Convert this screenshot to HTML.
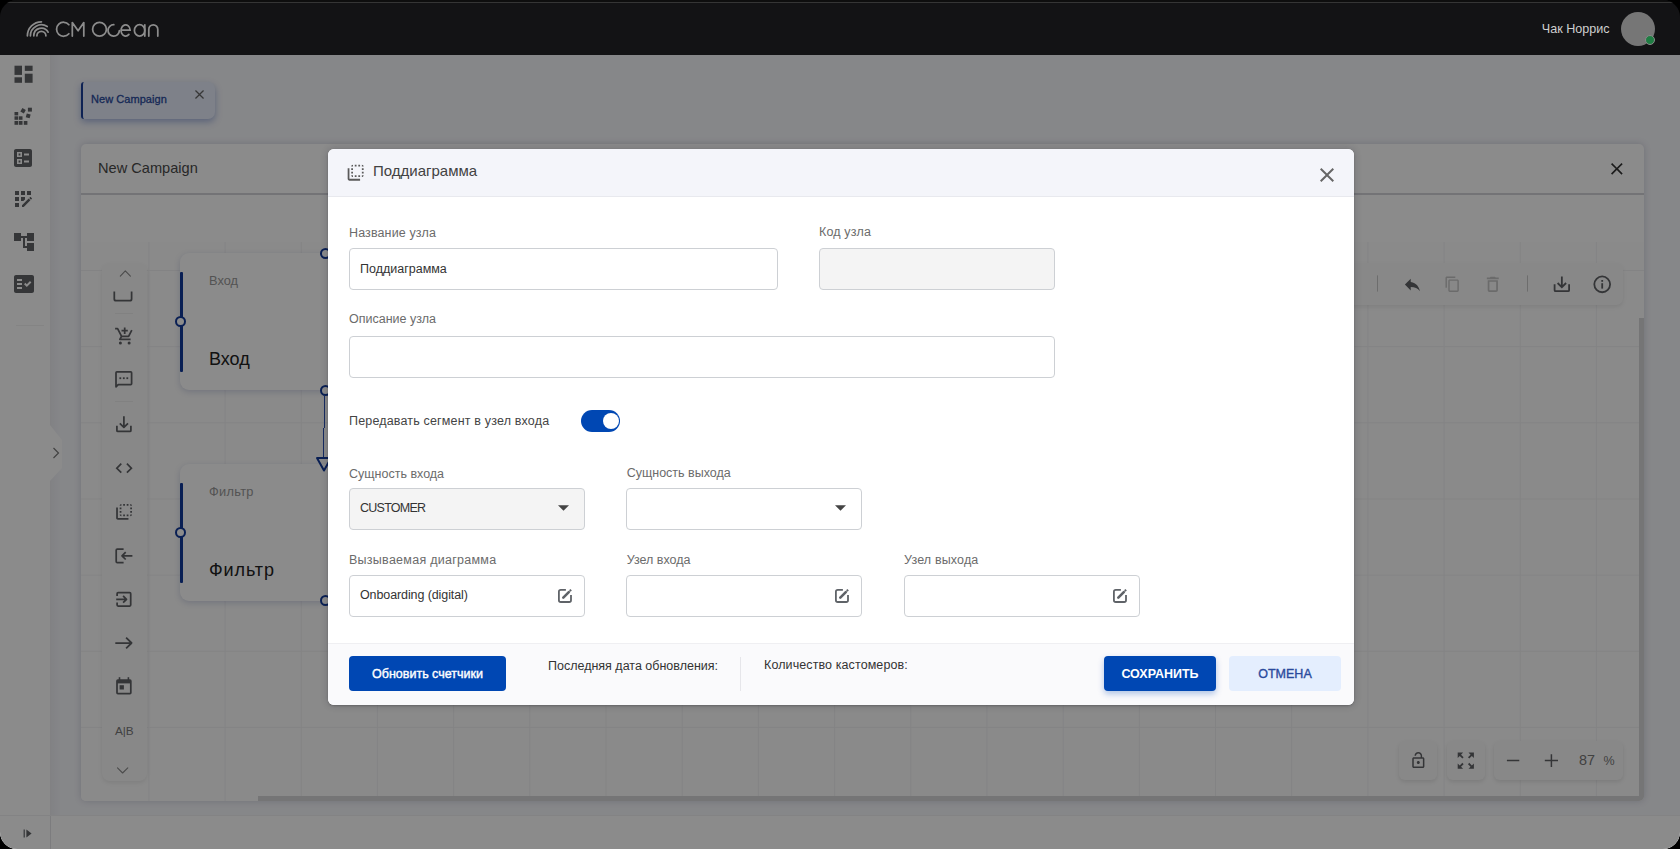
<!DOCTYPE html>
<html><head><meta charset="utf-8">
<style>
*{box-sizing:border-box;margin:0;padding:0}
html,body{width:1680px;height:849px;overflow:hidden;background:#000;font-family:"Liberation Sans",sans-serif}
.abs{position:absolute}
svg{position:absolute;overflow:visible}
#root{position:absolute;left:0;top:0;width:1680px;height:849px;overflow:hidden;border-radius:17px;background:#000}
#hdr{position:absolute;left:0;top:0;width:1680px;height:55px;background:#131315}
#hdr .tl{position:absolute;left:0;top:0;width:1680px;height:2px;background:#0e0e0e}
#hdr .tl2{position:absolute;left:0;top:2px;width:1680px;height:1px;background:#353535}
#side{position:absolute;left:0;top:55px;width:50px;height:760px;background:#fff;box-shadow:1px 0 0 #e2e2e6}
#foot{position:absolute;left:0;top:815px;width:1680px;height:34px;background:#fff;border-top:1px solid #f0f0f2}
#ov{position:absolute;left:0;top:55px;width:1680px;height:794px;background:rgba(0,0,0,0.455)}
.ic{fill:#626467}
.tab{position:absolute;left:81px;top:82px;width:134px;height:37px;background:#e7edfb;border-radius:3px 7px 7px 3px;border-left:2px solid #1a3f9a;box-shadow:0 3px 7px rgba(20,60,170,.35)}
.card{position:absolute;left:81px;top:144px;width:1563px;height:657px;background:#fff;border-radius:5px;box-shadow:0 0 7px rgba(20,30,80,.18);overflow:hidden}
.grid{position:absolute;left:0;top:98px;width:1563px;height:559px;background:#fdfdfd;
 background-image:linear-gradient(to right,#f1f1f3 1px,transparent 1px),linear-gradient(to bottom,#f1f1f3 1px,transparent 1px);
 background-size:76.2px 76.17px;background-position:67.4px 28px}
.pal{position:absolute;left:21px;top:119px;width:45px;height:518px;background:#fafafa;border-radius:8px;box-shadow:0 2px 4px rgba(0,0,0,.08)}
.node{position:absolute;width:160px;height:137px;background:#fff;border-radius:9px;box-shadow:0 2px 6px rgba(20,40,120,.18)}
.node .bl{position:absolute;left:0;width:3px;height:100px;background:#123a9a;border-radius:1px}
.node .dot{position:absolute;left:-5.5px;width:11px;height:11px;border:2px solid #123a9a;border-radius:50%;background:#fff}
.node .s{position:absolute;left:29px;font-size:12.8px;color:#999;white-space:nowrap}
.node .b{position:absolute;left:29px;font-size:18px;color:#222;white-space:nowrap}
.cdot{position:absolute;width:11px;height:11px;border:2px solid #123a9a;border-radius:50%;background:#fff}
.tb{position:absolute;left:1200px;top:119px;width:342px;height:42px;background:#fafafa;border-radius:7px;box-shadow:0 2px 4px rgba(0,0,0,.08)}
.zb{position:absolute;top:597px;height:39px;background:#fafafa;border-radius:6px;box-shadow:0 2px 4px rgba(0,0,0,.1)}
#modal{position:absolute;left:328px;top:149px;width:1026px;height:556px;background:#fff;border-radius:6px;overflow:hidden;box-shadow:0 0 7px 1px rgba(20,20,40,.16),0 1px 2px rgba(0,0,0,.2)}
.mh{position:absolute;left:0;top:0;width:1026px;height:48px;background:#f4f5fa;border-bottom:1px solid #e8e9ee}
.lbl{position:absolute;font-size:12.5px;color:#6b6b6b;white-space:nowrap;line-height:14px}
.inp{position:absolute;height:42px;border:1px solid #cdd0d4;border-radius:4px;background:#fff}
.dis{background:#f4f4f4}
.txt{position:absolute;font-size:12.5px;color:#333;white-space:nowrap;line-height:14px}
.mf{position:absolute;left:0;top:494px;width:1026px;height:62px;background:#fafafc;border-top:1px solid #efeff2}
.btn{position:absolute;top:12.3px;height:35px;border-radius:4px;background:#0047b3;color:#fff;font-size:12.5px;font-weight:bold;text-align:center;line-height:36.4px;white-space:nowrap}
</style></head><body>
<div id="root">
 <div class="abs" style="left:0;top:55px;width:1680px;height:794px;background:#f6f7fb"></div>
 <div id="hdr">
  <div class="tl"></div><div class="tl2"></div>
  <svg width="140" height="30" style="left:20px;top:12px" viewBox="20 12 140 30" fill="none" stroke="#8c8c8c" stroke-width="1.75" stroke-linecap="round" stroke-linejoin="round">
   <path d="M36.9 35.8 A4.5 4.5 0 0 1 45.9 35.8"/>
   <path d="M33.8 35.8 A7.6 7.6 0 0 1 48.1 32.2"/>
   <path d="M30.4 35.8 A11 11 0 0 1 47.2 26.5"/>
   <path d="M27.4 35.8 A14 14 0 0 1 41.4 21.8"/>
   <path d="M68.9 24.7 A7 7 0 1 0 68.9 33.8"/>
   <path d="M72.3 36 V22.6 L78.1 30.8 L83.8 22.6 V36"/>
   <circle cx="99.5" cy="29.2" r="6.9"/>
   <path d="M113.8 24.7 A5.7 5.7 0 1 0 119.4 30.6"/>
   <path d="M121.2 30.2 H130.2 A4.6 5.6 0 1 0 128.9 34.4"/>
   <ellipse cx="139.6" cy="30.4" rx="5.2" ry="5.7"/>
   <path d="M144.8 24.8 V36"/>
   <path d="M148.8 36 V29.6 A4.5 4.8 0 0 1 157.8 29.6 V36"/>
  </svg>
  <div class="abs" style="right:70.4px;top:22.2px;font-size:12.6px;color:#cfcfcf;white-space:nowrap">Чак Норрис</div>
  <div class="abs" style="left:1621px;top:12px;width:34px;height:34px;border-radius:50%;background:#767676"></div>
  <div class="abs" style="left:1644.6px;top:35px;width:10.4px;height:10.4px;border-radius:50%;background:#1f7d43;border:1.4px solid #8a8a8a"></div>
 </div>
 <div id="side">
  <svg width="50" height="60" viewBox="0 55 50 60" style="left:0;top:0" fill="#626467">
   <rect x="14.5" y="65.7" width="7.5" height="9.2"/><rect x="14.5" y="77.3" width="7.5" height="5.5"/><rect x="24.8" y="65.7" width="7.8" height="5.2"/><rect x="24.8" y="73.7" width="7.8" height="9.1"/>
  </svg>
  <svg width="50" height="40" viewBox="0 100 50 40" style="left:0;top:45px" fill="#626467">
   <rect x="14.5" y="112" width="3.7" height="3.4"/><rect x="14.5" y="116.3" width="3.7" height="3.5"/><rect x="18.9" y="116.3" width="3.6" height="3.5"/>
   <rect x="14.5" y="121" width="3.7" height="3.8"/><rect x="18.9" y="121" width="3.6" height="3.8"/><rect x="23.8" y="121" width="3.6" height="3.8"/>
   <rect x="21.1" y="108.8" width="4" height="4" transform="rotate(30 23.1 110.8)"/>
   <rect x="27.9" y="107.7" width="4" height="3.9"/>
   <rect x="26.2" y="113.9" width="4" height="4" transform="rotate(15 28.2 115.9)"/>
  </svg>
  <!-- ballot -->
  <svg class="ic" width="24" height="24" viewBox="0 0 24 24" style="left:11px;top:91px"><path d="M19 3H5c-1.1 0-2 .9-2 2v14c0 1.1.9 2 2 2h14c1.1 0 2-.9 2-2V5c0-1.1-.9-2-2-2zM11 11H6V6h5v5zm0 7H6v-5h5v5zm7-8.5h-5v-2h5v2zm0 7h-5v-2h5v2z"/><path d="M7.6 7.6h1.8v1.8H7.6zM7.6 14.6h1.8v1.8H7.6z" fill="#626467"/><rect x="7.2" y="7.2" width="2.6" height="2.6" fill="none"/></svg>
  <!-- app registration -->
  <svg class="ic" width="24" height="24" viewBox="0 0 24 24" style="left:11px;top:132px"><path d="M10 4h4v4h-4zM4 16h4v4H4zm0-6h4v4H4zm0-6h4v4H4zm10 8.42V10h-4v4h2.42zm6.88-1.13l-1.17-1.17c-.16-.16-.42-.16-.58 0l-.88.88L20 12.75l.88-.88c.16-.16.16-.42 0-.58zM11 18.25V20h1.75l6.67-6.67-1.75-1.75zM16 4h4v4h-4z"/></svg>
  <!-- account tree -->
  <svg class="ic" width="24" height="24" viewBox="0 0 24 24" style="left:11.7px;top:175px"><path d="M22 11V3h-7v3H9V3H2v8h7V8h2v10h4v3h7v-8h-7v3h-2V8h2v3z"/></svg>
  <!-- fact check -->
  <svg class="ic" width="24" height="24" viewBox="0 0 24 24" style="left:11.7px;top:217px"><path d="M20 3H4c-1.1 0-2 .9-2 2v14c0 1.1.9 2 2 2h16c1.1 0 2-.9 2-2V5c0-1.1-.9-2-2-2zM10 17H5v-2h5v2zm0-4H5v-2h5v2zm0-4H5V7h5v2zm4.82 6L12 12.16l1.41-1.41 1.41 1.42L17.99 9l1.42 1.42L14.82 15z"/></svg>
  <div class="abs" style="left:16px;top:270px;width:28px;height:1px;background:#f2f2f2"></div>
 </div>
 <div id="foot">
  <div class="abs" style="left:50px;top:0;width:1px;height:34px;background:#e4e4e8"></div>
  <svg width="10" height="10" viewBox="0 0 10 10" style="left:23px;top:13px"><rect x="0.6" y="0.5" width="1.2" height="8" fill="#606266"/><path d="M3.4 0.5 L8.6 4.5 L3.4 8.5z" fill="#606266"/></svg>
 </div>
 <!-- main area -->
 <div class="abs" style="left:50px;top:55px;width:1px;height:760px;background:#ececf0"></div>
 <div class="abs" style="left:51px;top:55px;width:10px;height:760px;background:linear-gradient(to right,rgba(0,0,30,.035),rgba(0,0,0,0))"></div>
 <div class="tab">
  <div class="abs" style="left:8px;top:10.5px;font-size:11px;letter-spacing:0.05px;font-weight:normal;-webkit-text-stroke:0.3px #2a4b9e;color:#2a4b9e;white-space:nowrap">New Campaign</div>
  <svg width="9" height="9" viewBox="5 5 14 14" style="left:112px;top:7.5px"><path fill="#666" d="M19 6.41L17.59 5 12 10.59 6.41 5 5 6.41 10.59 12 5 17.59 6.41 19 12 13.41 17.59 19 19 17.59 13.41 12z"/></svg>
 </div>
 <div class="abs" style="left:50px;top:425px;width:12px;height:56px;background:#fff;clip-path:polygon(0 0,0 100%,100% 77%,100% 27%)"></div>
 <svg width="8" height="12" viewBox="0 0 8 12" style="left:52px;top:447px" fill="none" stroke="#7a7a7a" stroke-width="1.2"><path d="M1.5 1 L6.5 6 L1.5 11"/></svg>
 <div class="card">
  <div class="abs" style="left:17px;top:16px;font-size:14.6px;color:#4a4a4a;white-space:nowrap">New Campaign</div>
  <svg width="11.7" height="11.7" viewBox="5 5 14 14" style="left:1529.5px;top:19px"><path fill="#333" d="M19 6.41L17.59 5 12 10.59 6.41 5 5 6.41 10.59 12 5 17.59 6.41 19 12 13.41 17.59 19 19 17.59 13.41 12z"/></svg>
  <div class="abs" style="left:0;top:49px;width:1563px;height:1.5px;background:#d4d4d8"></div>
  <div class="grid"></div>
  <!-- palette -->
  <div class="pal">
  </div>
  <!-- toolbar -->
  <div class="tb"></div>
  <!-- nodes -->
  <div class="node" style="left:99px;top:109px">
   <div class="bl" style="top:19px"></div><div class="dot" style="top:63px"></div>
   <div class="s" style="top:19.5px">Вход</div><div class="b" style="top:96px">Вход</div>
  </div>
  <div class="node" style="left:99px;top:320px">
   <div class="bl" style="top:19px"></div><div class="dot" style="top:63px"></div>
   <div class="s" style="top:19.5px;letter-spacing:0.3px">Фильтр</div><div class="b" style="top:96px;letter-spacing:0.9px">Фильтр</div>
  </div>
  <div class="cdot" style="left:238.5px;top:103.5px"></div>
  <div class="cdot" style="left:238.5px;top:241px"></div>
  <div class="cdot" style="left:238.5px;top:451px"></div>
  <div class="abs" style="left:243.3px;top:252px;width:1.2px;height:32px;background:#2a50b0"></div>
  <div class="abs" style="left:242.3px;top:284px;width:1.2px;height:30px;background:#2a50b0"></div>
  <svg width="18" height="16" viewBox="0 0 18 16" style="left:234px;top:312px" fill="none" stroke="#123a9a" stroke-width="2" stroke-linejoin="round"><path d="M2 2 H16 L9 14.5z"/></svg>
  <!-- zoom controls -->
  <div class="zb" style="left:1318px;width:38px"></div>
  <div class="zb" style="left:1366px;width:38px"></div>
  <div class="zb" style="left:1413px;width:129px"></div>
  <!-- scrollbars -->
  <div class="abs" style="left:1558px;top:174px;width:5px;height:479px;background:#d6d6d8"></div>
  <div class="abs" style="left:177px;top:652px;width:1386px;height:5px;background:#d6d6d8"></div>
 </div>

 <svg width="1680" height="849" style="left:0;top:0" viewBox="0 0 1680 849">
  <g fill="none" stroke="#8a8a8a" stroke-width="1.1" stroke-linecap="round" stroke-linejoin="round">
   <path d="M120.3 276.2 L125.3 270.9 L130.4 276.2"/>
   <path d="M117.5 767.8 L122.6 773 L127.8 767.8"/>
  </g>
  <g fill="none" stroke="#606266" stroke-width="1.75" stroke-linecap="butt" stroke-linejoin="round">
   <path d="M114.3 291.4 V299 Q114.3 300.7 116 300.7 H129.9 Q131.6 300.7 131.6 299 V291.4"/>
   <!-- cart -->
   <path d="M115.1 328.7 H117.6 L121.6 336.4 H128.6 L131.8 330.2"/>
   <path d="M121.6 336.4 L120 339 Q119.6 339.4 120.4 339.4 H130.6"/>
   <path d="M124.7 327.4 V334 M121.5 330.6 H127.8"/>
   <!-- chat -->
   <path d="M118.2 384.6 H130.7 Q131.6 384.6 131.6 383.7 V372.7 Q131.6 371.9 130.7 371.9 H116.9 Q116 371.9 116 372.7 V386.8 Z"/>
   <!-- login mirrored -->
   <path d="M123.6 549.1 H117.3 Q116.2 549.1 116.2 550.2 V561.5 Q116.2 562.6 117.3 562.6 H123.6"/>
   <path d="M132.4 555.8 H122 M125.7 552.1 L122 555.8 L125.7 559.5"/>
   <!-- exit -->
   <path d="M117.1 596 V593.7 Q117.1 592.7 118.1 592.7 H129.7 Q130.7 592.7 130.7 593.7 V605.1 Q130.7 606 129.7 606 H118.1 Q117.1 606 117.1 605.1 V602.6"/>
   <path d="M116.2 599.3 H126.4 M123.1 595.9 L126.5 599.3 L123.1 602.7"/>
   <!-- arrow -->
   <path d="M115.3 643 H131.6 M126.1 637.7 L131.6 643 L126.1 648.3"/>
   <!-- calendar -->
   <path d="M117.9 680 H130 Q130.8 680 130.8 681 V692.7 Q130.8 693.6 130 693.6 H117.9 Q117 693.6 117 692.7 V681 Q117 680 117.9 680 Z"/>
   <!-- download -->
   <path d="M116.9 425.8 V430.4 Q116.9 431.4 117.9 431.4 H129.9 Q130.9 431.4 130.9 430.4 V425.8"/>
   <path d="M123.9 416.3 V427.4 M119.8 423.3 L123.9 427.4 L128 423.3"/>
  </g>
  <g fill="#606266">
   <circle cx="120.4" cy="343" r="1.5"/><circle cx="129.1" cy="343" r="1.5"/>
   <rect x="119.4" y="377.3" width="1.8" height="1.8"/><rect x="122.9" y="377.3" width="1.8" height="1.8"/><rect x="126.4" y="377.3" width="1.8" height="1.8"/>
   <rect x="117" y="680" width="13.8" height="3.4"/>
   <rect x="118.7" y="677.2" width="1.6" height="3"/><rect x="127.6" y="677.2" width="1.6" height="3"/>
   <rect x="119.6" y="685.2" width="4.3" height="4.3"/>
   <!-- code -->
   <path transform="translate(113.9 458) scale(0.85)" d="M9.4 16.6L4.8 12l4.6-4.6L8 6l-6 6 6 6 1.4-1.4zm5.2 0l4.6-4.6-4.6-4.6L16 6l6 6-6 6-1.4-1.4z"/>
   <!-- flip to back -->
   <path transform="translate(113.5 501.3) scale(0.88)" d="M9 7H7v2h2V7zm0 4H7v2h2v-2zm0-8c-1.11 0-2 .9-2 2h2V3zm4 12h-2v2h2v-2zm6-12v2h2c0-1.1-.9-2-2-2zm-6 0h-2v2h2V3zM9 17v-2H7c0 1.1.89 2 2 2zm10-4h2v-2h-2v2zm0-4h2V7h-2v2zm0 8c1.1 0 2-.9 2-2h-2v2zM5 7H3v12c0 1.1.89 2 2 2h12v-2H5V7zm10-2h2V3h-2v2zm0 12h2v-2h-2v2z"/>
  </g>
  <text x="124.3" y="735.2" font-size="11.8" fill="#777" text-anchor="middle" font-family="Liberation Sans">A|B</text>
  <g stroke="#ececec" stroke-width="1"><path d="M115 313.5 H133 M115 401.5 H133"/></g>
  <!-- toolbar -->
  <g stroke="#c8c8c8" stroke-width="1"><path d="M1377.5 275.4 V291.6 M1527.5 275.4 V291.6"/></g>
  <path fill="#606266" transform="translate(1402.4 274.6) scale(0.833)" d="M10 9V5l-7 7 7 7v-4.1c5 0 8.5 1.6 11 5.1-1-5-4-10-11-11z"/>
  <path fill="#c4c4c4" transform="translate(1444.1 275.9) scale(0.7)" d="M16 1H4c-1.1 0-2 .9-2 2v14h2V3h12V1zm3 4H8c-1.1 0-2 .9-2 2v14c0 1.1.9 2 2 2h11c1.1 0 2-.9 2-2V7c0-1.1-.9-2-2-2zm0 16H8V7h11v14z"/>
  <path fill="#c4c4c4" transform="translate(1482.6 274.2) scale(0.85)" d="M6 19c0 1.1.9 2 2 2h8c1.1 0 2-.9 2-2V7H6v12zM8 9h8v10H8V9zm7.5-5l-1-1h-5l-1 1H5v2h14V4z"/>
  <g fill="none" stroke="#606266" stroke-width="1.8">
   <path d="M1554.6 284.2 V290.2 Q1554.6 291.2 1555.6 291.2 H1568.1 Q1569.1 291.2 1569.1 290.2 V284.2"/>
   <path d="M1561.85 276.6 V287.2 M1557.6 283 L1561.85 287.2 L1566.1 283"/>
   <circle cx="1602.2" cy="284.35" r="7.9"/>
  </g>
  <rect x="1601.3" y="283.2" width="1.8" height="5.4" fill="#606266"/><rect x="1601.3" y="280" width="1.8" height="1.8" fill="#606266"/>
  <!-- zoom controls -->
  <path fill="#606266" transform="translate(1409.2 751.2) scale(0.76)" d="M12 17c1.1 0 2-.9 2-2s-.9-2-2-2-2 .9-2 2 .9 2 2 2zm6-9h-1V6c0-2.76-2.24-5-5-5S7 3.24 7 6h1.9c0-1.71 1.39-3.1 3.1-3.1 1.71 0 3.1 1.39 3.1 3.1v2H6c-1.1 0-2 .9-2 2v10c0 1.1.9 2 2 2h12c1.1 0 2-.9 2-2V10c0-1.1-.9-2-2-2zm0 12H6V10h12v10z"/>
  <path fill="#606266" transform="translate(1455 749.9) scale(0.9)" d="M15 3l2.3 2.3-2.89 2.87 1.42 1.42L18.7 6.7 21 9V3h-6zM3 9l2.3-2.3 2.87 2.89 1.42-1.42L6.7 5.3 9 3H3v6zm6 12l-2.3-2.3 2.89-2.87-1.42-1.42L5.3 17.3 3 15v6h6zm12-6l-2.3 2.3-2.87-2.89-1.42 1.42 2.89 2.87L15 21h6v-6z"/>
  <g stroke="#606266" stroke-width="1.5"><path d="M1506.9 760.6 H1519.3 M1544.8 760.6 H1558 M1551.4 754.2 V766.9"/></g>
  <text x="1579" y="764.9" font-size="14.4" fill="#777" font-family="Liberation Sans">87</text>
  <text x="1603.6" y="764.9" font-size="12.5" fill="#777" font-family="Liberation Sans">%</text>
 </svg>
 <div id="ov"></div>
 <div id="modal">
  <div class="mh">
   <svg width="21.3" height="21.3" viewBox="0 0 24 24" style="left:17px;top:12.7px"><path fill="#5a5a5a" d="M9 7H7v2h2V7zm0 4H7v2h2v-2zm0-8c-1.11 0-2 .9-2 2h2V3zm4 12h-2v2h2v-2zm6-12v2h2c0-1.1-.9-2-2-2zm-6 0h-2v2h2V3zM9 17v-2H7c0 1.1.89 2 2 2zm10-4h2v-2h-2v2zm0-4h2V7h-2v2zm0 8c1.1 0 2-.9 2-2h-2v2zM5 7H3v12c0 1.1.89 2 2 2h12v-2H5V7zm10-2h2V3h-2v2zm0 12h2v-2h-2v2z"/></svg>
   <div class="abs" style="left:45px;top:13.3px;font-size:15px;color:#424242;white-space:nowrap">Поддиаграмма</div>
   <svg width="14" height="14" viewBox="5 5 14 14" style="left:992px;top:19px"><path fill="#666" d="M19 6.41L17.59 5 12 10.59 6.41 5 5 6.41 10.59 12 5 17.59 6.41 19 12 13.41 17.59 19 19 17.59 13.41 12z"/></svg>
  </div>
  <div class="lbl" style="left:21px;top:76.5px;letter-spacing:0.12px">Название узла</div>
  <div class="inp" style="left:21px;top:99px;width:429px"></div>
  <div class="txt" style="left:32px;top:113px">Поддиаграмма</div>
  <div class="lbl" style="left:491px;top:76.4px;letter-spacing:0.15px">Код узла</div>
  <div class="inp dis" style="left:491px;top:99px;width:236px"></div>
  <div class="lbl" style="left:21px;top:163px">Описание узла</div>
  <div class="inp" style="left:21px;top:187px;width:706px"></div>
  <div class="txt" style="left:21px;top:264.7px;color:#444;letter-spacing:0.17px">Передавать сегмент в узел входа</div>
  <div class="abs" style="left:253px;top:261px;width:39px;height:22px;border-radius:11px;background:#0047b3"></div>
  <div class="abs" style="left:274.5px;top:264px;width:16px;height:16px;border-radius:50%;background:#fff"></div>
  <div class="lbl" style="left:21px;top:317.5px">Сущность входа</div>
  <div class="inp dis" style="left:21px;top:339px;width:236px"></div>
  <div class="txt" style="left:32px;top:352.3px;letter-spacing:-0.75px">CUSTOMER</div>
  <svg width="11" height="6" viewBox="0 0 10 5" style="left:230px;top:356px"><path d="M0 0 L10 0 L5 5z" fill="#444"/></svg>
  <div class="lbl" style="left:298.7px;top:317.4px">Сущность выхода</div>
  <div class="inp" style="left:298px;top:339px;width:236px"></div>
  <svg width="11" height="6" viewBox="0 0 10 5" style="left:507px;top:356px"><path d="M0 0 L10 0 L5 5z" fill="#444"/></svg>
  <div class="lbl" style="left:21px;top:404px;letter-spacing:0.27px">Вызываемая диаграмма</div>
  <div class="inp" style="left:21px;top:426px;width:236px"></div>
  <div class="txt" style="left:32px;top:439.4px;letter-spacing:-0.1px">Onboarding (digital)</div>
  <div class="lbl" style="left:298.7px;top:404.2px">Узел входа</div>
  <div class="inp" style="left:298px;top:426px;width:236px"></div>
  <div class="lbl" style="left:576px;top:403.8px;letter-spacing:0.15px">Узел выхода</div>
  <div class="inp" style="left:576px;top:426px;width:236px"></div>
  <svg width="14" height="14" viewBox="0 0 14 14" style="left:230px;top:440px" fill="none" stroke="#5f6368"><path stroke-width="1.8" d="M7.9 0.9 H2.8 Q0.9 0.9 0.9 2.8 V11.2 Q0.9 13 2.8 13 H11.2 Q13 13 13 11.2 V6.1"/><path stroke-width="2.6" stroke-linecap="round" d="M5.3 8.6 L10.8 3.1"/><path stroke-width="2.1" d="M11.8 2.1 L13.1 0.8"/></svg>
  <svg width="14" height="14" viewBox="0 0 14 14" style="left:507.3px;top:440.2px" fill="none" stroke="#5f6368"><path stroke-width="1.8" d="M7.9 0.9 H2.8 Q0.9 0.9 0.9 2.8 V11.2 Q0.9 13 2.8 13 H11.2 Q13 13 13 11.2 V6.1"/><path stroke-width="2.6" stroke-linecap="round" d="M5.3 8.6 L10.8 3.1"/><path stroke-width="2.1" d="M11.8 2.1 L13.1 0.8"/></svg>
  <svg width="14" height="14" viewBox="0 0 14 14" style="left:784.9px;top:440.2px" fill="none" stroke="#5f6368"><path stroke-width="1.8" d="M7.9 0.9 H2.8 Q0.9 0.9 0.9 2.8 V11.2 Q0.9 13 2.8 13 H11.2 Q13 13 13 11.2 V6.1"/><path stroke-width="2.6" stroke-linecap="round" d="M5.3 8.6 L10.8 3.1"/><path stroke-width="2.1" d="M11.8 2.1 L13.1 0.8"/></svg>
  <div class="mf">
   <div class="btn" style="left:21px;width:157px;letter-spacing:0px;font-weight:normal;-webkit-text-stroke:0.4px #fff">Обновить счетчики</div>
   <div class="txt" style="left:220px;top:15px">Последняя дата обновления:</div>
   <div class="abs" style="left:412px;top:13px;width:1px;height:34px;background:#e6e6ea"></div>
   <div class="txt" style="left:436px;top:14.4px;letter-spacing:0.1px">Количество кастомеров:</div>
   <div class="btn" style="left:776px;width:112px;box-shadow:0 3px 6px rgba(0,71,179,.3)">СОХРАНИТЬ</div>
   <div class="btn" style="left:901px;width:112px;background:#e4eefe;color:#2a4a9c;font-weight:normal;-webkit-text-stroke:0.35px #2a4a9c;letter-spacing:0px">ОТМЕНА</div>
  </div>
 </div>
</div>
</body></html>
